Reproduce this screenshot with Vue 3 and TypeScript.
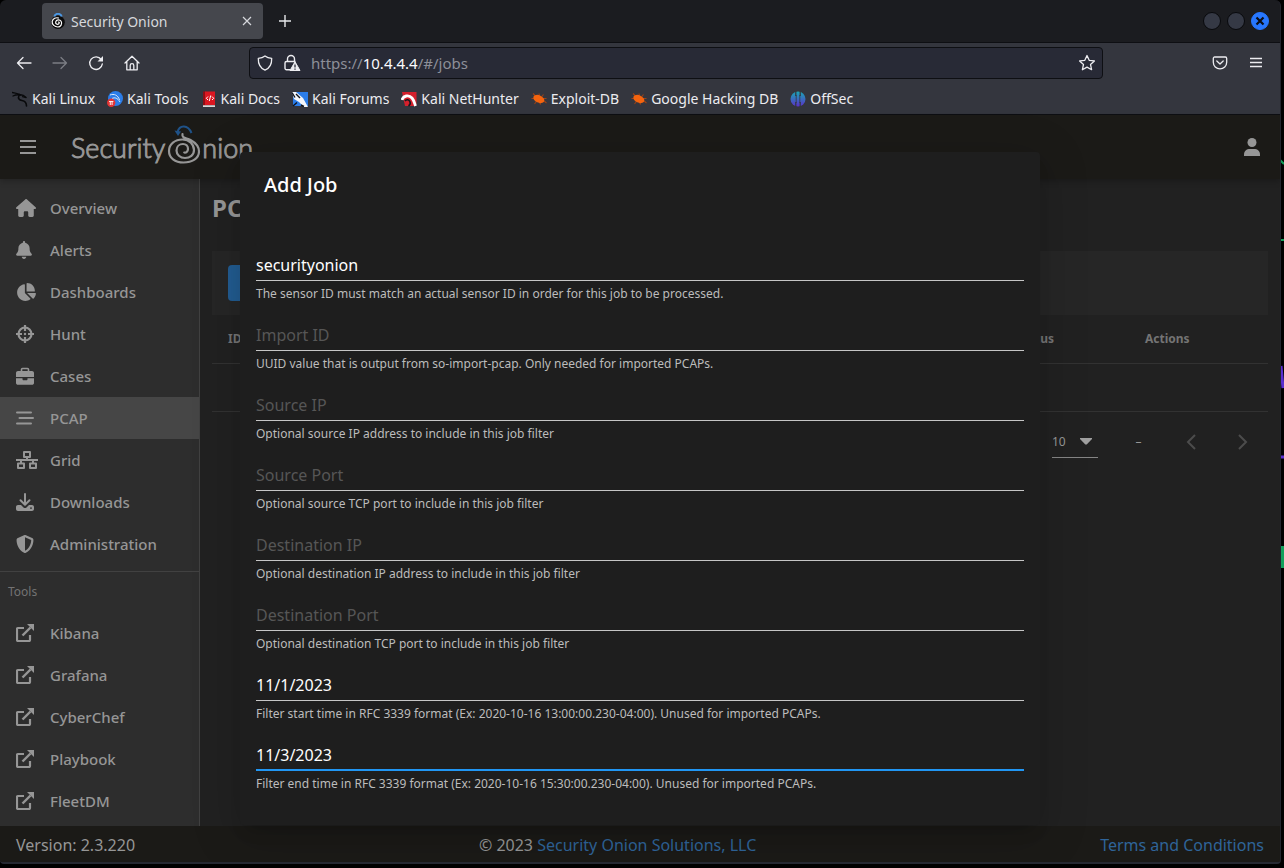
<script setup lang="ts">
import { ref } from 'vue'

interface NavItem {
  label: string
  icon: string
  active?: boolean
}

interface Field {
  id: string
  value: string
  label: string
  hint: string
  focused?: boolean
}

const bookmarks: string[] = [
  'Kali Linux',
  'Kali Tools',
  'Kali Docs',
  'Kali Forums',
  'Kali NetHunter',
  'Exploit-DB',
  'Google Hacking DB',
  'OffSec',
]

const navItems: NavItem[] = [
  { label: 'Overview', icon: 'home' },
  { label: 'Alerts', icon: 'bell' },
  { label: 'Dashboards', icon: 'pie' },
  { label: 'Hunt', icon: 'crosshairs' },
  { label: 'Cases', icon: 'briefcase' },
  { label: 'PCAP', icon: 'stream', active: true },
  { label: 'Grid', icon: 'network' },
  { label: 'Downloads', icon: 'download' },
  { label: 'Administration', icon: 'shield' },
]

const tools: string[] = ['Kibana', 'Grafana', 'CyberChef', 'Playbook', 'FleetDM']

const fields = ref<Field[]>([
  { id: 'sensor', value: 'securityonion', label: 'Sensor ID', hint: 'The sensor ID must match an actual sensor ID in order for this job to be processed.' },
  { id: 'import', value: '', label: 'Import ID', hint: 'UUID value that is output from so-import-pcap. Only needed for imported PCAPs.' },
  { id: 'src-ip', value: '', label: 'Source IP', hint: 'Optional source IP address to include in this job filter' },
  { id: 'src-port', value: '', label: 'Source Port', hint: 'Optional source TCP port to include in this job filter' },
  { id: 'dst-ip', value: '', label: 'Destination IP', hint: 'Optional destination IP address to include in this job filter' },
  { id: 'dst-port', value: '', label: 'Destination Port', hint: 'Optional destination TCP port to include in this job filter' },
  { id: 'begin', value: '11/1/2023', label: 'Filter Begin', hint: 'Filter start time in RFC 3339 format (Ex: 2020-10-16 13:00:00.230-04:00). Unused for imported PCAPs.' },
  { id: 'end', value: '11/3/2023', label: 'Filter End', hint: 'Filter end time in RFC 3339 format (Ex: 2020-10-16 15:30:00.230-04:00). Unused for imported PCAPs.', focused: true },
])

const pageSize = ref('10')
</script>

<template>
  <div class="desktop">
    <svg class="wallpaper" width="6" height="600" viewBox="0 0 6 600" aria-hidden="true">
      <path d="M0 158l6 6M1 240h5" stroke="#12a05c" stroke-width="2" />
      <path d="M3 366l2 22M1 457h5" stroke="#5a2fd0" stroke-width="3" />
      <path d="M3 546h3v22h-3z" fill="#12a05c" />
    </svg>

    <div class="window">
      <div class="tabbar">
        <div class="tab">
          <svg class="favicon" viewBox="0 0 16 16" aria-hidden="true">
            <circle cx="8" cy="9.200" r="6.800" fill="#0c0c0c" />
            <path d="M4.300 3.600a3.800 3.600 0 0 1 7.400 0" fill="none" stroke="#4b97e2" stroke-width="2" />
            <path d="M8 9.300c1-.8 1.900.6.800 1.500-1.500 1.200-3.600-.1-3.100-2 .6-2.300 4-2.700 5.400-.5 1.500 2.500-.4 5.700-3.300 5.700S1.700 11.500 2.200 8.500c.5-2.800 3.700-4.500 6.600-3.400" fill="none" stroke="#fff" stroke-width="1.200" />
          </svg>
          <span class="tab-title">Security Onion</span>
          <button class="icon-btn tab-close" aria-label="Close tab">
            <svg width="10" height="10" viewBox="0 0 10 10"><path d="M1 1l8 8M9 1L1 9" fill="none" stroke="currentColor" stroke-width="1.200" /></svg>
          </button>
        </div>
        <button class="icon-btn new-tab" aria-label="New tab">
          <svg width="14" height="14" viewBox="0 0 14 14"><path d="M7 1v12M1 7h12" fill="none" stroke="currentColor" stroke-width="1.400" /></svg>
        </button>
        <div class="window-controls">
          <button class="dot" aria-label="Minimize"></button>
          <button class="dot" aria-label="Maximize"></button>
          <button class="dot dot-close" aria-label="Close">
            <svg width="10" height="10" viewBox="0 0 10 10"><path d="M1.500 1.500l7 7M8.500 1.500l-7 7" stroke="#0b0d14" stroke-width="2.200" /></svg>
          </button>
        </div>
      </div>

      <div class="toolbar">
        <div class="nav-buttons">
          <button class="icon-btn nav-btn" aria-label="Back">
            <svg width="16" height="16" viewBox="0 0 16 16"><path d="M15 8H1.500M7 2.500L1.500 8 7 13.500" fill="none" stroke="currentColor" stroke-width="1.300" stroke-linejoin="round" stroke-linecap="round" /></svg>
          </button>
          <button class="icon-btn nav-btn dim" aria-label="Forward">
            <svg width="16" height="16" viewBox="0 0 16 16"><path d="M1 8h13.500M9 2.500L14.500 8 9 13.500" fill="none" stroke="currentColor" stroke-width="1.300" stroke-linejoin="round" stroke-linecap="round" /></svg>
          </button>
          <button class="icon-btn nav-btn" aria-label="Reload">
            <svg width="16" height="16" viewBox="0 0 16 16"><path d="M13.200 4.500A6.300 6.300 0 1 0 14.300 9" fill="none" stroke="currentColor" stroke-width="1.400" stroke-linecap="round" /><path d="M15 1v5.500H9.500z" fill="currentColor" /></svg>
          </button>
          <button class="icon-btn nav-btn" aria-label="Home">
            <svg width="16" height="16" viewBox="0 0 16 16"><path d="M1 8l7-6.700L15 8M2.800 6.500v8.300h10.400V6.500M6.200 14.500v-4a1.800 1.800 0 0 1 3.600 0v4" fill="none" stroke="currentColor" stroke-width="1.300" stroke-linejoin="round" stroke-linecap="round" /></svg>
          </button>
        </div>
        <div class="urlbar">
          <svg class="url-icon" width="16" height="16" viewBox="0 0 16 16" aria-hidden="true"><path d="M8 .9c2 1.600 4.200 2.200 6.700 2.400C14.900 9 13.200 13 8 15.200 2.800 13 1.100 9 1.300 3.300 3.800 3.100 6 2.500 8 .9z" fill="none" stroke="currentColor" stroke-width="1.300" stroke-linejoin="round" /></svg>
          <svg class="url-icon lock" width="18" height="18" viewBox="0 0 18 18" aria-hidden="true">
            <path d="M4.500 7.500V5a3.500 3.500 0 0 1 7 0v2.500M7 15.800H3.500a1.500 1.500 0 0 1-1.500-1.500V9a1.500 1.500 0 0 1 1.500-1.500h9" fill="none" stroke="currentColor" stroke-width="1.400" />
            <path d="M12 7.800l5 8.700H7z" fill="currentColor" stroke="currentColor" stroke-linejoin="round" />
            <path d="M12 10.500v3M12 14.500v1.300" stroke="#282a36" stroke-width="1.300" />
          </svg>
          <div class="url" role="textbox" aria-label="Address">https://<span class="host">10.4.4.4</span>/#/jobs</div>
          <button class="icon-btn" aria-label="Bookmark this page">
            <svg width="18" height="18" viewBox="0 0 18 18"><path d="M9 1.500l2.200 4.800 5.200.6-3.900 3.500 1.100 5.300L9 13.100l-4.600 2.600 1.100-5.300L1.600 6.900l5.200-.6z" fill="none" stroke="currentColor" stroke-width="1.300" stroke-linejoin="round" /></svg>
          </button>
        </div>
        <div class="toolbar-end">
          <button class="icon-btn nav-btn" aria-label="Save to Pocket">
            <svg width="16" height="16" viewBox="0 0 16 16"><path d="M2.700 2h10.600c.8 0 1.400.6 1.400 1.400v3.800a6.700 6.700 0 0 1-13.400 0V3.400C1.300 2.600 1.900 2 2.700 2zM4.800 6L8 9l3.200-3" fill="none" stroke="currentColor" stroke-width="1.300" stroke-linejoin="round" stroke-linecap="round" /></svg>
          </button>
          <button class="icon-btn nav-btn" aria-label="Open application menu">
            <svg width="14" height="16" viewBox="0 0 14 16"><path d="M1 3.500h12M1 7.500h12M1 11.500h12" stroke="currentColor" stroke-width="1.300" /></svg>
          </button>
        </div>
      </div>

      <nav class="bookmarks" aria-label="Bookmarks">
        <a v-for="(name, i) in bookmarks" :key="name" href="#" class="bookmark">
          <svg width="16" height="16" viewBox="0 0 16 16" aria-hidden="true">
            <g v-if="i === 0" fill="none" stroke="#08090b" stroke-linecap="round">
              <path d="M.5 1.500c3 .6 5.500.8 8 2.300M1 5c2.500-1.200 5-1.500 7.500-1" stroke-width="1.300" />
              <path d="M7.500 3.500c3 .2 4.800 1 6.500 3M7 4.500c-1.500 3 .5 4.500 3 5 2.800.6 4.500 2.500 4.500 5.500" stroke-width="1.600" />
              <path d="M13.500 6.500l-3-.8" stroke-width="1.200" />
            </g>
            <g v-else-if="i === 1">
              <circle cx="8.500" cy="7.500" r="7.500" fill="#2b7de9" />
              <path d="M3 4c4-1.500 8 0 9.500 5M5 7.500c3-1.500 5.500-.5 8 3.500" fill="none" stroke="#dbe9fb" stroke-width="1" />
              <circle cx="4.200" cy="11.800" r="4.200" fill="#e23434" />
              <path d="M2 10.500h4.400M3.300 10.500v3.500M5.100 10.500v3.500" stroke="#fff" stroke-width=".9" />
            </g>
            <g v-else-if="i === 2">
              <path d="M2 .5h3V15H2z" fill="#8d0f16" />
              <path d="M4 .5h10v13.500H4z" fill="#db1721" />
              <path d="M2 14.200h12V16H2z" fill="#d9d9d9" />
              <path d="M7 5.500L5.300 7.300 7 9M11 5.500l1.700 1.800L11 9M9.700 4.500l-1.400 5.500" fill="none" stroke="#fff" stroke-width="1" />
            </g>
            <g v-else-if="i === 3">
              <path d="M1 1h15v14H1z" fill="#2b7de9" />
              <path d="M0 1h4l7 6 5 9h-4L7 11 2 8z" fill="#f4f6fa" />
              <path d="M0 1.500l3 5M4 3l4 4M1 15l4-3.500M9 14l3 1.500" stroke="#10131b" stroke-width="1.400" />
            </g>
            <g v-else-if="i === 4">
              <path d="M1 1h14.500v12l-2 2H4z" fill="#d3202c" />
              <path d="M1 9c1-4.500 7-5.500 10-2 2.200 2.600 2.400 5 3.500 8" fill="none" stroke="#fff" stroke-width="2.800" />
              <path d="M4 10c1.500-2 4-1.500 5 .8 .6 1.600 0 3.200-1.500 4.200" fill="none" stroke="#16181d" stroke-width="1.600" />
            </g>
            <g v-else-if="i === 5 || i === 6">
              <path d="M2 2.500l3 3M.5 7.500l4 0M3.500 13l2-2.500M8 2.500l.5 3M12.500 3.500l-2 2.500M9.500 13.500l-1-2.500M12.500 9.500l3 2.500M12 7.500h3.500" stroke="#9d4216" stroke-width="1.100" />
              <ellipse cx="7.800" cy="8" rx="5.800" ry="3.700" transform="rotate(25 7.800 8)" fill="#f4640f" />
            </g>
            <g v-else>
              <defs>
                <linearGradient id="offsec" x1="0" y1="0" x2="0" y2="1">
                  <stop offset="0" stop-color="#18a7b5" />
                  <stop offset="1" stop-color="#5a31c9" />
                </linearGradient>
              </defs>
              <circle cx="8" cy="8" r="7.500" fill="url(#offsec)" />
              <path d="M5.800 0v5M5.800 11v5M10.200 0v5M10.200 11v5" stroke="#34363e" stroke-width="1.200" />
              <path d="M6.200 4v8M9.800 4v8" stroke="#34363e" stroke-width=".8" />
            </g>
          </svg>
          <span>{{ name }}</span>
        </a>
      </nav>

      <div class="app">
        <header class="app-header">
          <button class="icon-btn menu-btn" aria-label="Toggle navigation">
            <svg width="16" height="14" viewBox="0 0 16 14"><path d="M0 1h16M0 7h16M0 13h16" stroke="currentColor" stroke-width="2.200" /></svg>
          </button>
          <div class="logo">
            <span>Security</span>
            <svg width="37" height="46" viewBox="0 0 37 46" aria-hidden="true">
              <path d="M12.500 8C14.500.5 23 .5 26.500 9" fill="none" stroke="#1f5288" stroke-width="2" />
              <path d="M9.500 6.500l6.500 1-3 4.500z" fill="#1f5288" />
              <path d="M17.500 10c-1 4.500 4 3.800 8 6 5 2.700 8.500 6 8.500 11.500 0 7-7 11-15.500 11S4 34 4 27s6-11.500 13.500-11.500c7 0 11.500 5 11.500 10.500 0 5-4 8-9 8s-8.500-3.500-8.500-7.500 3-6.500 6.500-6.500c3 0 5 2 5 4.800 0 2.400-1.600 4-3.800 3.700" fill="none" stroke="currentColor" stroke-width="2.200" stroke-linecap="round" />
            </svg>
            <span>nion</span>
          </div>
          <button class="icon-btn user-btn" aria-label="Account">
            <svg width="16" height="18" viewBox="0 0 16 18"><circle cx="8" cy="4.500" r="4.500" fill="currentColor" /><path d="M0 18v-1.500C0 13 2.500 11 6 11h4c3.500 0 6 2 6 5.500V18z" fill="currentColor" /></svg>
          </button>
        </header>

        <div class="body">
          <aside class="sidebar">
            <nav aria-label="Main">
              <a v-for="item in navItems" :key="item.label" href="#" class="nav-item" :class="{ active: item.active }">
                <span class="nav-icon">
                  <svg v-if="item.icon === 'home'" width="20" height="18" viewBox="0 0 576 512"><path fill="currentColor" d="M575.800 255.500c0 18-15 32.100-32 32.100h-32l.7 160.200c0 2.700-.2 5.400-.5 8.100V472c0 22.100-17.900 40-40 40H392c-22.100 0-40-17.900-40-40v-88c0-17.700-14.300-32-32-32h-64c-17.700 0-32 14.300-32 32v88c0 22.100-17.900 40-40 40h-80c-22.100 0-40-17.900-40-40V287.600H32c-18 0-32-14-32-32.100 0-9 3-17 10-24L266.400 8c7-7 15-8 22-8s15 2 21 7l255.400 224.500c8 7 12 15 11 24z" /></svg>
                  <svg v-else-if="item.icon === 'bell'" width="16" height="18" viewBox="0 0 448 512"><path fill="currentColor" d="M224 0c-17.700 0-32 14.300-32 32v19.200C119 66 64 130.600 64 208v18.800c0 47-17.300 92.400-48.500 127.600l-7.400 8.300c-8.400 9.400-10.400 22.900-5.300 34.400S19.400 416 32 416h384c12.600 0 24-7.400 29.200-18.900s3.100-25-5.300-34.400l-7.400-8.300C401.300 319.200 384 273.900 384 226.800V208c0-77.400-55-142-128-156.800V32c0-17.700-14.300-32-32-32zm45.300 493.300c12-12 18.700-28.300 18.700-45.300H160c0 17 6.700 33.300 18.700 45.300S207 512 224 512s33.300-6.700 45.300-18.700z" /></svg>
                  <svg v-else-if="item.icon === 'pie'" width="20" height="18" viewBox="0 0 576 512"><path fill="currentColor" d="M304 240V16.600c0-9 7-16.600 16-16.600 123.700 0 224 100.300 224 224 0 9-7.600 16-16.600 16H304zM32 272C32 150.700 122.100 50.300 239 34.300c9.200-1.300 17 6.100 17 15.400V288l156.500 156.500c6.700 6.700 6.200 17.700-1.500 23.100C371.800 495.600 323.800 512 272 512 139.500 512 32 404.600 32 272zm526.400 16c9.300 0 16.600 7.800 15.400 17-7.700 55.900-34.600 105.600-73.900 142.300-6 5.600-15.400 5.200-21.200-.7L320 288h238.400z" /></svg>
                  <svg v-else-if="item.icon === 'crosshairs'" width="18" height="18" viewBox="0 0 18 18" fill="none" stroke="currentColor" stroke-width="2.200"><circle cx="9" cy="9" r="6.500" /><path d="M9 0v6M9 12v6M0 9h6M12 9h6" /><circle cx="9" cy="9" r="1.200" fill="currentColor" stroke="none" /></svg>
                  <svg v-else-if="item.icon === 'briefcase'" width="18" height="18" viewBox="0 0 18 18"><path fill="none" stroke="currentColor" stroke-width="1.600" d="M5.500 4.500V2.500c0-.6.400-1 1-1h5c.6 0 1 .4 1 1v2" /><path fill="currentColor" d="M2 4h14c1.100 0 2 .9 2 2v4H0V6c0-1.100.9-2 2-2zM0 11.200h6.500v1c0 .5.400 1 1 1h3c.6 0 1-.5 1-1v-1H18V16c0 1-.9 1.800-2 1.800H2c-1.100 0-2-.8-2-1.800z" /></svg>
                  <svg v-else-if="item.icon === 'stream'" width="18" height="18" viewBox="0 0 18 18"><path stroke="currentColor" stroke-width="2" stroke-linecap="round" d="M1 3.500h14M3.500 9H17M1 14.500h14" /></svg>
                  <svg v-else-if="item.icon === 'network'" width="22" height="18" viewBox="0 0 22 18" fill="none" stroke="currentColor" stroke-width="2" stroke-linejoin="round"><path d="M8 1h6v5H8zM2 12.500h6V17H2zM14 12.500h6V17h-6zM0 9h22M11 6v3M5 9v3.500M17 9v3.500" /></svg>
                  <svg v-else-if="item.icon === 'download'" width="18" height="18" viewBox="0 0 18 18"><path fill="none" stroke="currentColor" stroke-width="2" stroke-linecap="round" stroke-linejoin="round" d="M9 1v10.500M4.500 7.300L9 11.700l4.500-4.400" /><path fill="currentColor" fill-rule="evenodd" d="M2 12h3l2.500 2.400c.8.800 2.200.8 3 0L13 12h3c1.100 0 2 .9 2 2v2c0 1.100-.9 2-2 2H2c-1.100 0-2-.9-2-2v-2c0-1.100.9-2 2-2zm13 2.200a.9.900 0 1 0 0 1.800.9.900 0 0 0 0-1.800z" /></svg>
                  <svg v-else width="18" height="18" viewBox="0 0 512 512"><path fill="currentColor" fill-rule="evenodd" d="M256 0c4.600 0 9.200 1 13.400 2.900l188.300 79.900c22 9.300 38.400 31 38.300 57.200-.5 99.200-41.300 280.700-213.600 363.200-16.700 8-36.100 8-52.800 0C57.300 420.700 16.500 239.200 16 140c-.1-26.200 16.300-47.900 38.300-57.200L242.700 2.900C246.800 1 251.400 0 256 0zm0 66.800v378.100c138-66.800 175.100-214.800 176-303.400L256 66.800z" /></svg>
                </span>
                <span>{{ item.label }}</span>
              </a>
            </nav>
            <div class="tools-title">Tools</div>
            <nav aria-label="Tools">
              <a v-for="tool in tools" :key="tool" href="#" class="nav-item">
                <span class="nav-icon">
                  <svg width="18" height="18" viewBox="0 0 18 18"><path fill="none" stroke="currentColor" stroke-width="2.200" stroke-linejoin="round" d="M8 4H2c-.6 0-1 .4-1 1v11c0 .6.4 1 1 1h11c.6 0 1-.4 1-1v-5" /><path fill="none" stroke="currentColor" stroke-width="2.400" d="M6.500 11.500l8-8" /><path fill="currentColor" d="M11 0h7v7z" /></svg>
                </span>
                <span>{{ tool }}</span>
              </a>
            </nav>
          </aside>

          <main class="main">
            <h2 class="page-title">PCAP</h2>
            <div class="card"><button class="add-btn" aria-label="Add job"></button></div>
            <table class="jobs">
              <thead>
                <tr>
                  <th>ID</th>
                  <th class="col-status">Status</th>
                  <th class="col-actions">Actions</th>
                </tr>
              </thead>
              <tbody>
                <tr><td colspan="3"></td></tr>
              </tbody>
            </table>
            <div class="pager">
              <div class="page-size">
                <select v-model="pageSize" aria-label="Rows per page">
                  <option>10</option>
                  <option>50</option>
                </select>
                <svg width="12" height="7" viewBox="0 0 12 7" aria-hidden="true"><path d="M0 0h12v1L6.700 6.500H5.300L0 1z" fill="#a0a0a0" /></svg>
              </div>
              <span class="range">–</span>
              <button class="icon-btn page-btn" disabled aria-label="Previous page"><svg width="10" height="16" viewBox="0 0 10 16"><path d="M9 1L2 8l7 7" fill="none" stroke="currentColor" stroke-width="2" /></svg></button>
              <button class="icon-btn page-btn" disabled aria-label="Next page"><svg width="10" height="16" viewBox="0 0 10 16"><path d="M1 1l7 7-7 7" fill="none" stroke="currentColor" stroke-width="2" /></svg></button>
            </div>
          </main>
        </div>

        <footer class="app-footer">
          <span>Version: 2.3.220</span>
          <span>© 2023 <a href="#">Security Onion Solutions, LLC</a></span>
          <a href="#">Terms and Conditions</a>
        </footer>

        <div class="overlay">
          <form class="dialog" role="dialog" aria-labelledby="dialog-title" @submit.prevent>
            <h1 id="dialog-title" class="dialog-title">Add Job</h1>
            <div class="fields">
              <div v-for="field in fields" :key="field.id" class="field">
                <input :id="field.id" v-model="field.value" type="text" :placeholder="field.label" :aria-label="field.label" :class="{ focused: field.focused }" />
                <label :for="field.id">{{ field.hint }}</label>
              </div>
            </div>
          </form>
        </div>
      </div>
    </div>
  </div>
</template>

<style>
html,
body {
  background: #000;
}
</style>

<style scoped>
* {
  box-sizing: border-box;
}
.desktop {
  position: relative;
  display: flex;
  height: 100vh;
  padding: 0 3px 4px 0;
  overflow: hidden;
  background: #000;
  font-family: 'Noto Sans', 'Open Sans', sans-serif;
}
.wallpaper {
  position: absolute;
  top: 0;
  right: 0;
}
.window {
  position: relative;
  flex: 1;
  min-width: 0;
  display: flex;
  flex-direction: column;
  border-right: 1px solid #23252e;
  border-bottom: 2px solid #262932;
  border-radius: 6px 6px 4px 4px;
  overflow: hidden;
  background: #1b1c20;
}
a {
  color: inherit;
  text-decoration: none;
}
.icon-btn {
  display: flex;
  align-items: center;
  justify-content: center;
  padding: 0;
  border: 0;
  background: none;
  color: inherit;
}

/* Browser chrome */
.tabbar {
  display: flex;
  align-items: center;
  height: 43px;
  padding: 0 11px 0 42px;
  border-bottom: 1px solid #0e0f13;
  color: #e6e7ea;
}
.tab {
  display: flex;
  align-items: center;
  width: 221px;
  height: 36px;
  padding: 0 10px 0 8px;
  border-radius: 4px;
  background: #45474d;
  color: #d6d8dc;
}
.favicon {
  width: 16px;
  height: 16px;
  margin-right: 5px;
}
.tab-title {
  flex: 1;
  font-size: 14px;
}
.tab-close {
  width: 12px;
  height: 12px;
}
.new-tab {
  margin-left: 15px;
}
.window-controls {
  display: flex;
  gap: 6px;
  margin-left: auto;
}
.dot {
  display: flex;
  align-items: center;
  justify-content: center;
  width: 18px;
  height: 18px;
  padding: 0;
  border: 1px solid #08090c;
  border-radius: 50%;
  background: #353945;
}
.dot-close {
  border-color: #2777ff;
  background: #2777ff;
}
.toolbar {
  display: flex;
  align-items: center;
  height: 40px;
  padding: 0 12px;
  background: #34363e;
  color: #ececf0;
}
.nav-buttons,
.toolbar-end {
  display: flex;
  gap: 12px;
}
.nav-btn {
  width: 24px;
  height: 24px;
}
.dim {
  color: #7b7d84;
}
.urlbar {
  flex: 1;
  display: flex;
  align-items: center;
  height: 32px;
  margin: 0 105px;
  padding: 0 6px 0 7px;
  border: 1px solid #0e0f13;
  border-radius: 4px;
  background: #282a36;
}
.lock {
  margin: 0 10px;
}
.url {
  flex: 1;
  font-size: 15px;
  color: #8d8f98;
}
.host {
  color: #fbfbfe;
}
.bookmarks {
  display: flex;
  align-items: center;
  gap: 12px;
  height: 32px;
  padding: 0 12px;
  border-bottom: 1px solid #0e0f13;
  background: #34363e;
  color: #ececf0;
  font-size: 14px;
}
.bookmark {
  display: flex;
  align-items: center;
  gap: 4px;
  white-space: nowrap;
}

/* Application */
.app {
  position: relative;
  flex: 1;
  min-height: 0;
  display: flex;
  flex-direction: column;
  background: #212121;
  color: #969696;
}
.app-header {
  position: relative;
  display: flex;
  align-items: center;
  height: 64px;
  padding: 0 20px;
  background: #1b1a17;
  box-shadow: 0 2px 6px rgba(0, 0, 0, 0.25);
}
.logo {
  display: flex;
  align-items: center;
  margin-left: 35px;
  font-family: Lato, 'Open Sans', sans-serif;
  font-weight: 300;
  font-size: 27px;
  -webkit-text-stroke: 1px currentColor;
}
.user-btn {
  margin-left: auto;
}
.body {
  flex: 1;
  min-height: 0;
  display: flex;
}
.sidebar {
  width: 200px;
  padding-top: 8px;
  border-right: 1px solid #414141;
  background: #2d2d2d;
}
.nav-item {
  display: flex;
  align-items: center;
  height: 42px;
  padding: 0 16px;
  font-size: 15px;
  font-weight: 500;
}
.nav-item.active {
  background: #464646;
}
.nav-icon {
  display: flex;
  width: 34px;
}
.tools-title {
  margin-top: 6px;
  padding: 0 8px;
  border-top: 1px solid #414141;
  line-height: 40px;
  font-size: 12px;
  color: #737373;
}
.main {
  flex: 1;
  min-width: 0;
  padding: 12px;
}
.page-title {
  margin: 0;
  font-size: 24px;
  line-height: 34px;
}
.card {
  height: 64px;
  margin-top: 26px;
  padding: 14px 16px;
  background: #262626;
}
.add-btn {
  width: 64px;
  height: 36px;
  border: 0;
  border-radius: 4px;
  background: #225c91;
}
.jobs {
  width: 100%;
  table-layout: fixed;
  border-collapse: collapse;
}
.jobs th,
.jobs td {
  height: 48px;
  padding: 0 16px;
  border-bottom: 1px solid #323232;
  text-align: left;
  font-size: 12px;
  color: #747474;
}
.jobs .col-status {
  width: 129px;
}
.jobs .col-actions {
  width: 139px;
}
.pager {
  display: flex;
  align-items: center;
  justify-content: flex-end;
  height: 60px;
  padding-right: 13px;
  font-size: 12px;
}
.page-size {
  display: flex;
  align-items: center;
  width: 46px;
  height: 32px;
  padding-right: 6px;
  border-bottom: 1px solid #858585;
}
.page-size select {
  flex: 1;
  width: 20px;
  padding: 0;
  border: 0;
  appearance: none;
  background: none;
  color: inherit;
  font: inherit;
}
.range {
  width: 81px;
  text-align: center;
}
.page-btn {
  width: 24px;
  height: 24px;
  color: #4c4c4c;
}
.page-btn + .page-btn {
  margin-left: 28px;
}
.app-footer {
  display: flex;
  align-items: center;
  justify-content: space-between;
  height: 36px;
  padding: 2px 16px 0;
  background: #1b1a17;
  font-size: 16px;
}
.app-footer a {
  color: #2f6499;
}

/* Dialog */
.overlay {
  position: absolute;
  inset: 0;
  display: flex;
  align-items: center;
  justify-content: center;
}
.dialog {
  width: 800px;
  max-height: 90%;
  overflow: hidden;
  border-radius: 4px;
  background: #1e1e1e;
  box-shadow: 0 11px 15px -7px rgba(0, 0, 0, 0.2), 0 9px 46px 8px rgba(0, 0, 0, 0.12);
}
.dialog-title {
  margin: 0;
  padding: 16px 24px;
  font-size: 20px;
  font-weight: 500;
  line-height: 33px;
  color: #fff;
}
.fields {
  padding: 32px 16px 60px;
}
.field {
  display: flex;
  flex-direction: column;
  margin-bottom: 18px;
}
.field input {
  height: 32px;
  padding: 0;
  border: 0;
  border-bottom: 1px solid #c6c6c6;
  border-radius: 0;
  outline: 0;
  background: none;
  color: #fff;
  font-family: inherit;
  font-size: 16px;
}
.field input::placeholder {
  color: #565656;
  opacity: 1;
}
.field input.focused {
  border-color: #2196f3;
  box-shadow: inset 0 -1px #2196f3;
}
.field label {
  margin-top: 6px;
  line-height: 14px;
  font-size: 12px;
  color: #bcbcbc;
}
</style>
